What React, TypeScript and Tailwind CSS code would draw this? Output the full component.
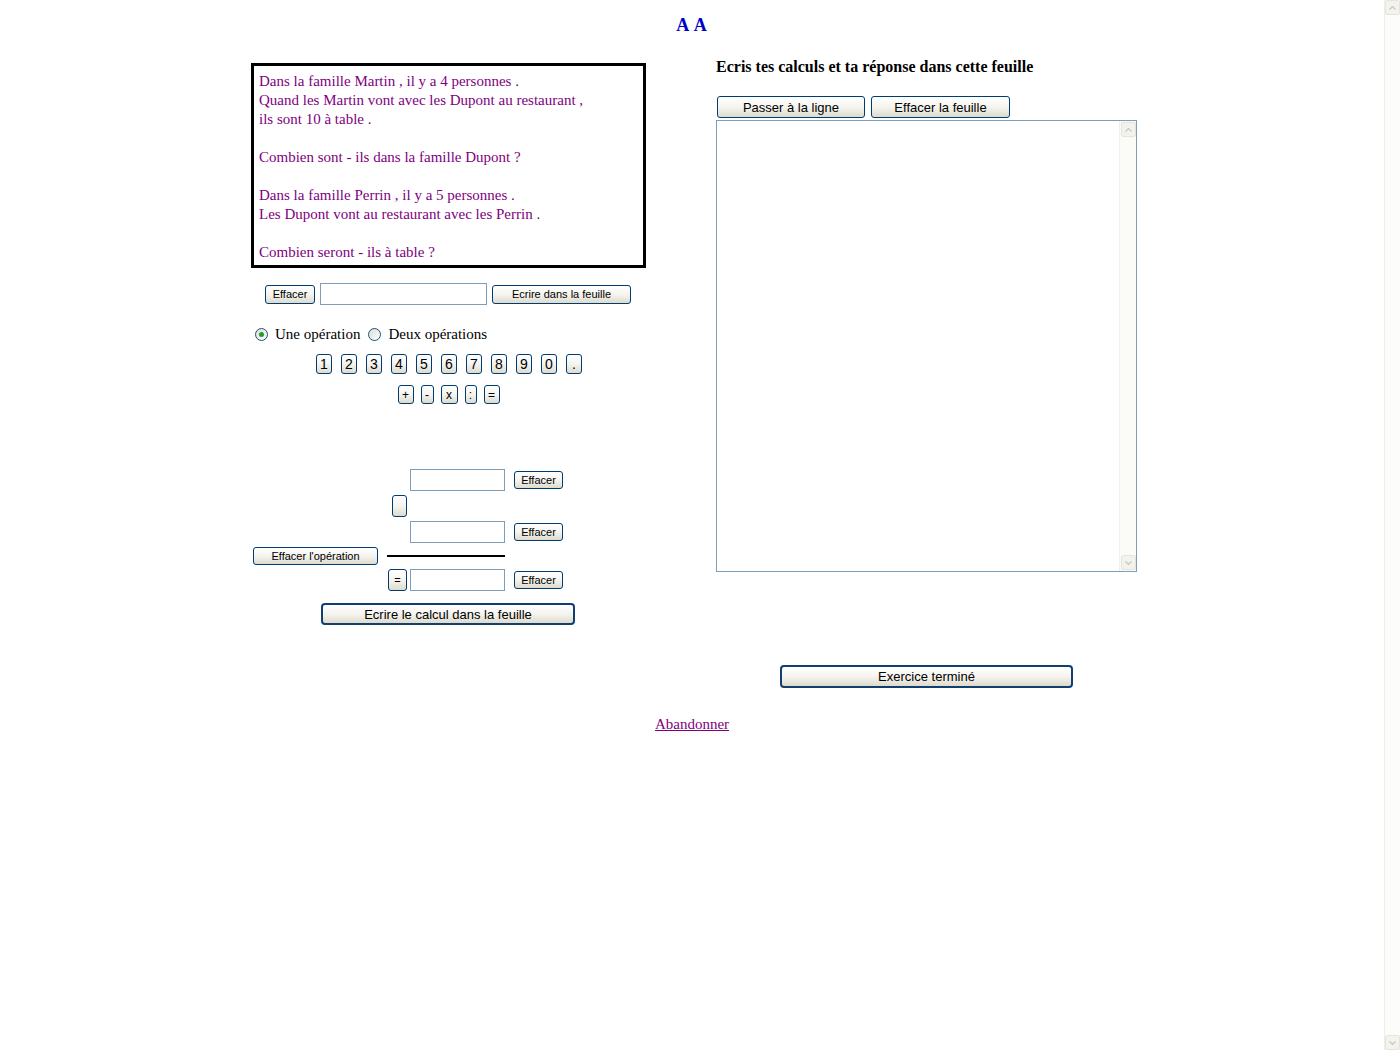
import * as React from 'react';

const serif = "font-['Liberation_Serif',serif]";
const sans = "font-['Liberation_Sans',Arial,sans-serif]";
const xpBtn = `${sans} border border-[#003c74] rounded-[3px] bg-linear-to-b from-white via-[#f5f4ef] to-[#dedbcd] text-black leading-none flex items-center justify-center`;
const xpBtnDefault = `${sans} border-2 border-[#123e70] rounded-[4px] bg-linear-to-b from-white via-[#f5f4ef] to-[#dedbcd] text-black leading-none flex items-center justify-center`;
const xpInput = "border border-[#7f9db9] bg-white";

const Radio: React.FC<{ checked?: boolean }> = ({ checked }) => (
    <span className="w-[13px] h-[13px] rounded-full border border-[#1c5180] bg-linear-to-br from-[#dcdcd7] to-white flex items-center justify-center">
        {checked && <span className="w-[5px] h-[5px] rounded-full bg-[#21a121]" />}
    </span>
);

const Arrow: React.FC<{ up?: boolean }> = ({ up }) => (
    <div className="w-[15px] h-[15px] border border-[#e6e5dd] rounded-[2px] bg-[#f3f2ec] flex items-center justify-center">
        <svg width="7" height="4" viewBox="0 0 7 4">
            <path d={up ? 'M0.5 3.5 L3.5 0.5 L6.5 3.5' : 'M0.5 0.5 L3.5 3.5 L6.5 0.5'} fill="none" stroke="#c9c8c0" strokeWidth="1.2" />
        </svg>
    </div>
);

export default function App() {
    const digits = ['1', '2', '3', '4', '5', '6', '7', '8', '9', '0', '.'];
    const ops = [
        { s: '+', w: 'w-[16px]' },
        { s: '-', w: 'w-[13px]' },
        { s: 'x', w: 'w-[17px]' },
        { s: ':', w: 'w-[12px]' },
        { s: '=', w: 'w-[16px]' },
    ];

    return (
        <div className="flex bg-white min-h-[1050px] w-[1400px]">
            <div className="flex-1">
                <div className={`${serif} text-center pt-[14px] text-[18px] leading-[22px] font-bold text-[#0000cc] tracking-[1px]`}>A A</div>

                <div className="flex ml-[251px] mt-[22px]">
                    {/* left column */}
                    <div className="w-[395px] pt-[5px]">
                        <div className={`${serif} border-[3px] border-black h-[205px] pl-[5px] pt-[6px] text-[15px] leading-[19px] text-[#800080]`}>
                            <div>Dans la famille Martin , il y a 4 personnes .</div>
                            <div>Quand les Martin vont avec les Dupont au restaurant ,</div>
                            <div>ils sont 10 à table .</div>
                            <div className="h-[19px]" />
                            <div>Combien sont - ils dans la famille Dupont ?</div>
                            <div className="h-[19px]" />
                            <div>Dans la famille Perrin , il y a 5 personnes .</div>
                            <div>Les Dupont vont au restaurant avec les Perrin .</div>
                            <div className="h-[19px]" />
                            <div>Combien seront - ils à table ?</div>
                        </div>

                        <div className="flex items-center h-[22px] mt-[15px] ml-[14px] gap-[5px]">
                            <button className={`${xpBtn} w-[50px] h-[19px] text-[11px]`}>Effacer</button>
                            <div className={`${xpInput} w-[167px] h-[22px]`} />
                            <button className={`${xpBtn} w-[139px] h-[19px] text-[11px]`}>Ecrire dans la feuille</button>
                        </div>

                        <div className={`${serif} flex items-center h-[18px] mt-[20px] ml-[4px] text-[15px] text-black`}>
                            <Radio checked />
                            <span className="ml-[7px]">Une opération</span>
                            <span className="ml-[8px]"><Radio /></span>
                            <span className="ml-[7px]">Deux opérations</span>
                        </div>

                        <div className="flex justify-center gap-[9px] mt-[11px] ml-[1px]">
                            {digits.map(d => (
                                <button key={d} className={`${xpBtn} w-[16px] h-[20px] text-[14px]`}>{d}</button>
                            ))}
                        </div>

                        <div className="flex justify-center gap-[7px] mt-[11px]">
                            {ops.map(o => (
                                <button key={o.s} className={`${xpBtn} ${o.w} h-[19px] text-[12px]`}>{o.s}</button>
                            ))}
                        </div>

                        {/* operation area */}
                        <div className="mt-[65px] flex flex-col gap-[4px]">
                            <div className="flex items-center h-[22px]">
                                <div className="w-[159px]" />
                                <div className={`${xpInput} w-[95px] h-[22px]`} />
                                <button className={`${xpBtn} ml-[9px] w-[49px] h-[18px] text-[11px]`}>Effacer</button>
                            </div>
                            <div className="flex items-center h-[22px]">
                                <div className="w-[141px]" />
                                <button className={`${xpBtn} w-[15px] h-[22px]`} />
                            </div>
                            <div className="flex items-center h-[22px]">
                                <div className="w-[159px]" />
                                <div className={`${xpInput} w-[95px] h-[22px]`} />
                                <button className={`${xpBtn} ml-[9px] w-[49px] h-[18px] text-[11px]`}>Effacer</button>
                            </div>
                            <div className="flex items-center h-[18px]">
                                <button className={`${xpBtn} ml-[2px] w-[125px] h-[18px] text-[11px]`}>Effacer l'opération</button>
                                <div className="ml-[9px] w-[118px] h-[2px] bg-black" />
                            </div>
                            <div className="flex items-center h-[22px]">
                                <div className="w-[137px]" />
                                <button className={`${xpBtn} w-[19px] h-[22px] text-[11px]`}>=</button>
                                <div className={`${xpInput} ml-[3px] w-[95px] h-[22px]`} />
                                <button className={`${xpBtn} ml-[9px] w-[49px] h-[18px] text-[11px]`}>Effacer</button>
                            </div>
                        </div>

                        <button className={`${xpBtnDefault} mt-[12px] ml-[70px] w-[254px] h-[22px] text-[13px]`}>Ecrire le calcul dans la feuille</button>
                    </div>

                    {/* right column */}
                    <div className="ml-[70px] w-[421px]">
                        <div className={`${serif} text-[16px] leading-[18px] font-bold text-black`}>Ecris tes calculs et ta réponse dans cette feuille</div>
                        <div className="flex gap-[6px] mt-[20px] ml-[1px]">
                            <button className={`${xpBtn} w-[148px] h-[22px] text-[13px]`}>Passer à la ligne</button>
                            <button className={`${xpBtn} w-[139px] h-[22px] text-[13px]`}>Effacer la feuille</button>
                        </div>
                        <div className="mt-[2px] h-[452px] border border-[#7f9db9] bg-white flex justify-end">
                            <div className="w-[17px] bg-[#fbfbf8] border-l border-[#f0efe8] flex flex-col justify-between items-center py-[1px]">
                                <Arrow up />
                                <Arrow />
                            </div>
                        </div>
                        <button className={`${xpBtnDefault} mt-[93px] ml-[64px] w-[293px] h-[23px] text-[13px]`}>Exercice terminé</button>
                    </div>
                </div>

                <div className="text-center mt-[23px]">
                    <a href="#" className={`${serif} text-[15px] text-[#800080] underline`}>Abandonner</a>
                </div>
            </div>

            <div className="w-[16px] bg-[#fcfcfa] border-l border-[#efeee7] flex flex-col justify-between items-center">
                <Arrow up />
                <Arrow />
            </div>
        </div>
    );
}
